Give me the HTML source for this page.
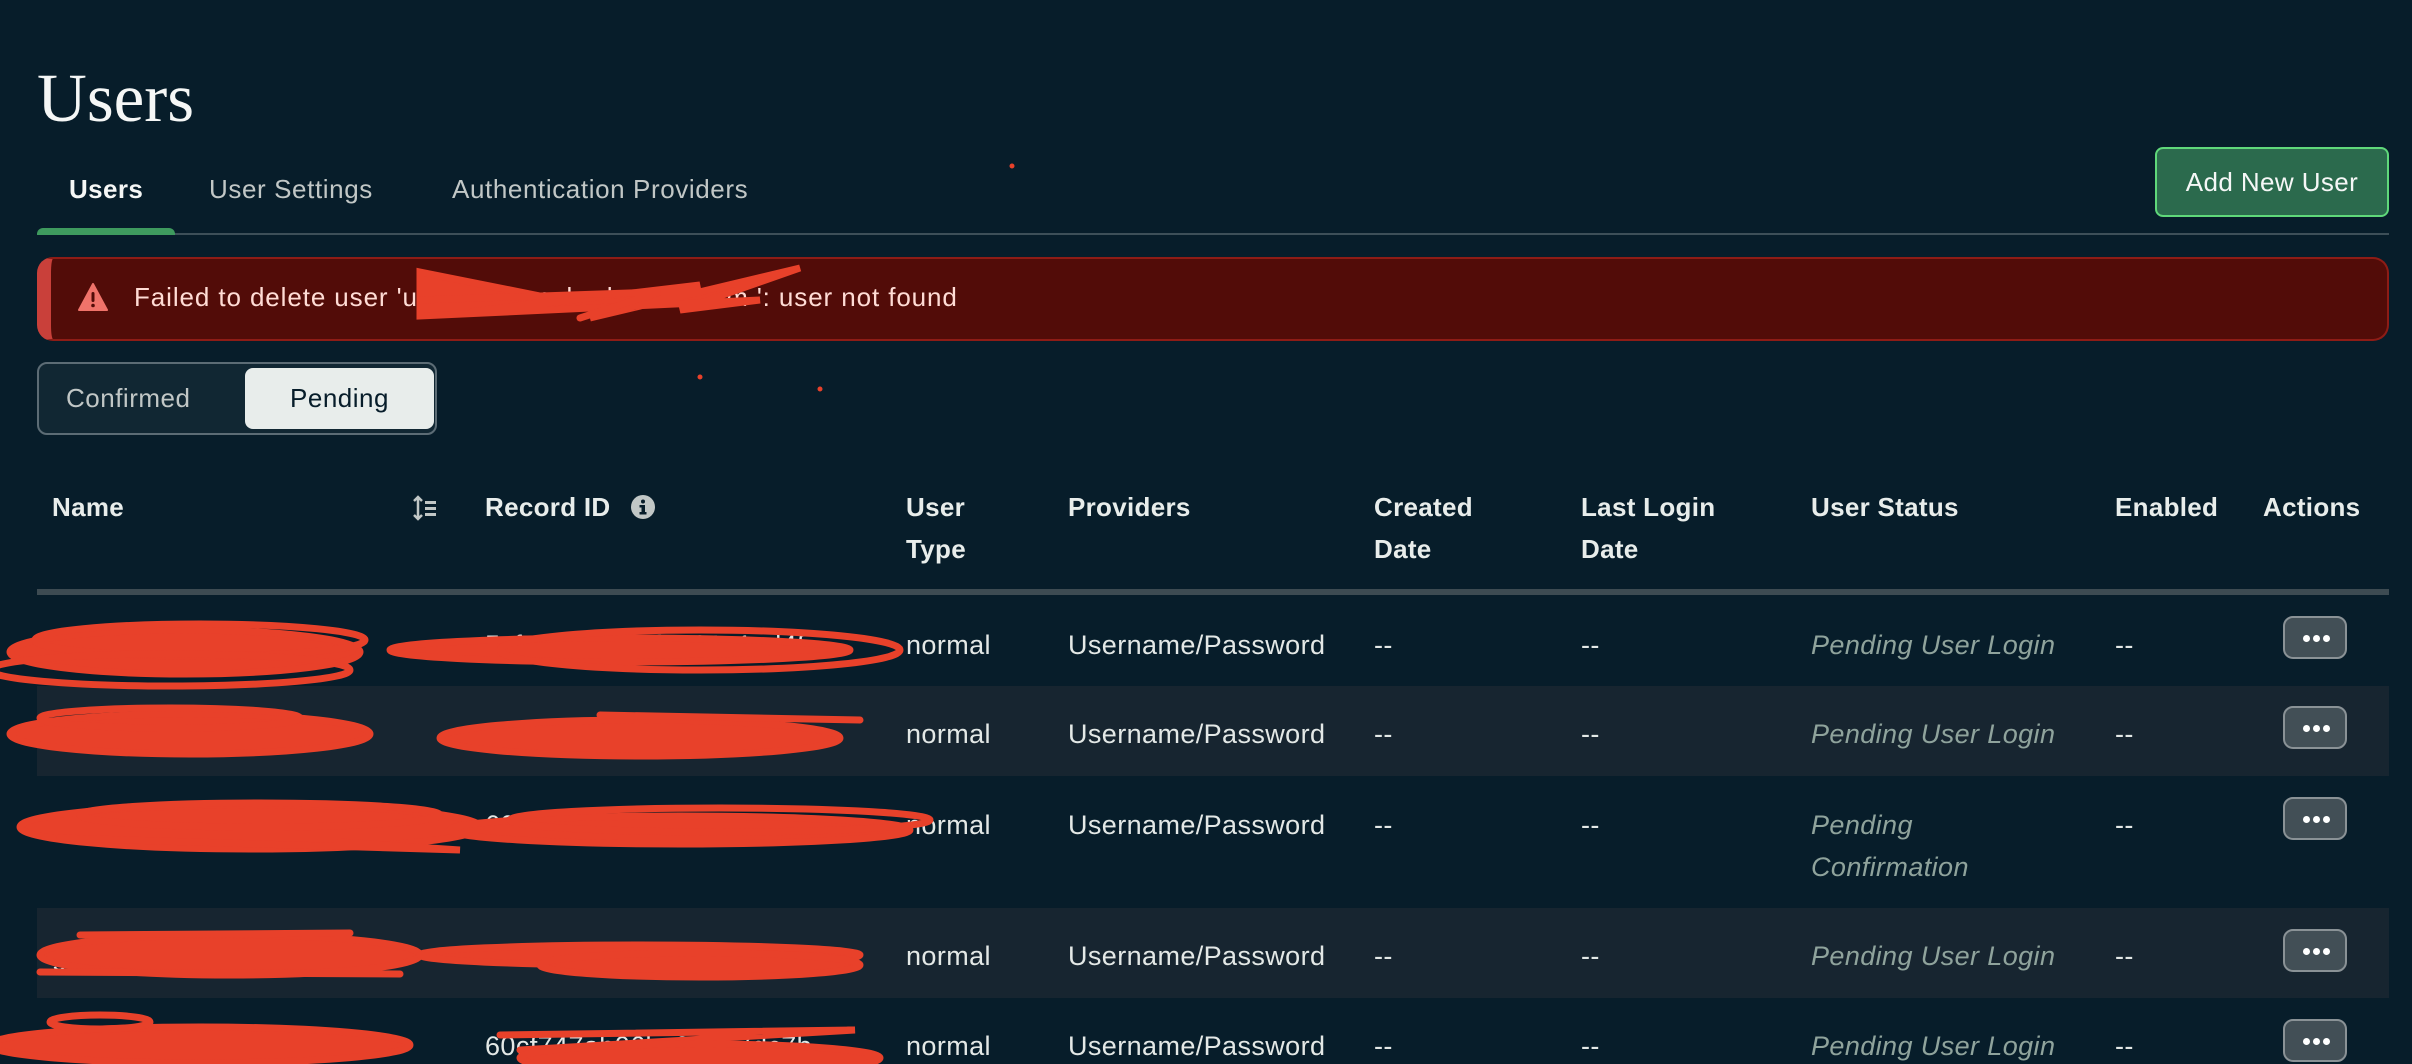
<!DOCTYPE html>
<html><head><meta charset="utf-8">
<style>
*{margin:0;padding:0;box-sizing:border-box}
html,body{width:2412px;height:1064px;overflow:hidden;background:#071d2a;font-family:"Liberation Sans",sans-serif;color:#e3e8e6}
.a{position:absolute;white-space:nowrap}
.t{font-size:27px;line-height:32px;letter-spacing:0.4px}
.h{font-size:26px;font-weight:bold;line-height:42px;color:#e8edeb;letter-spacing:0.3px}
.st{color:#8fa39c;font-style:italic}
.btn{position:absolute;left:2283px;width:64px;height:43px;border:2px solid #8a9296;background:#424f56;border-radius:10px}
.btn i{position:absolute;top:17px;width:7px;height:7px;border-radius:50%;background:#fff}
</style></head><body>
<div class="a" style="left:37px;top:58px;font-family:'Liberation Serif',serif;font-size:69px;line-height:80px;color:#f5f7f6">Users</div>

<div class="a" style="left:69px;top:174px;font-size:26px;font-weight:bold;color:#f5f7f6;letter-spacing:0.4px">Users</div>
<div class="a" style="left:209px;top:174px;font-size:26px;color:#c1c7c6;letter-spacing:0.6px">User Settings</div>
<div class="a" style="left:452px;top:174px;font-size:26px;color:#c1c7c6;letter-spacing:0.6px">Authentication Providers</div>
<div class="a" style="left:37px;top:233px;width:2352px;height:2px;background:#3d4f58"></div>
<div class="a" style="left:37px;top:228px;width:138px;height:7px;background:#3e9a5e;border-radius:6px 6px 0 0"></div>

<div class="a" style="left:2155px;top:147px;width:234px;height:70px;background:#2b6a4d;border:2px solid #5fd87a;border-radius:8px;font-size:26px;color:#f5f7f6;text-align:center;line-height:66px;letter-spacing:0.4px">Add New User</div>

<div class="a" style="left:37px;top:257px;width:2352px;height:84px;background:#520c08;border:2px solid #8e1c16;border-left:14px solid #c9403a;border-radius:16px"></div>
<svg class="a" style="left:78px;top:283px" width="30" height="28" viewBox="0 0 30 28"><path d="M15 1 L29 27 L1 27 Z" fill="#f0736a" stroke="#f0736a" stroke-linejoin="round" stroke-width="2"/><rect x="13.5" y="9" width="3" height="10" rx="1.5" fill="#520c08"/><circle cx="15" cy="22.5" r="1.8" fill="#520c08"/></svg>
<div class="a" style="left:134px;top:282px;font-size:26px;color:#ffdcd5;letter-spacing:0.9px">Failed to delete user 'user@example-domain.com ': user not found</div>

<div class="a" style="left:37px;top:362px;width:400px;height:73px;background:#112733;border:2px solid #5c6c75;border-radius:10px"></div>
<div class="a" style="left:66px;top:383px;font-size:26px;color:#c1c7c6;letter-spacing:0.5px">Confirmed</div>
<div class="a" style="left:245px;top:368px;width:189px;height:61px;background:#e8edeb;border-radius:8px;font-size:26px;color:#071d2a;text-align:center;line-height:61px;letter-spacing:0.5px">Pending</div>

<div class="a h" style="left:52px;top:486px">Name</div>
<svg class="a" style="left:412px;top:495px" width="26" height="26" viewBox="0 0 26 26"><path d="M6 2 L6 24 M2 6 L6 2 L10 6 M2 20 L6 24 L10 20" stroke="#c1c7c6" stroke-width="2.5" fill="none"/><rect x="13" y="6" width="11" height="3" fill="#c1c7c6"/><rect x="13" y="12" width="11" height="3" fill="#c1c7c6"/><rect x="13" y="18" width="11" height="3" fill="#c1c7c6"/></svg>
<div class="a h" style="left:485px;top:486px">Record ID</div>
<svg class="a" style="left:631px;top:495px" width="24" height="24" viewBox="0 0 24 24"><circle cx="12" cy="12" r="12" fill="#c1c7c6"/><rect x="10.5" y="10" width="3.5" height="9" fill="#071d2a"/><rect x="8.5" y="10" width="4" height="2.5" fill="#071d2a"/><rect x="8.5" y="17" width="7" height="2.5" fill="#071d2a"/><circle cx="12" cy="6.5" r="2" fill="#071d2a"/></svg>
<div class="a h" style="left:906px;top:486px">User<br>Type</div>
<div class="a h" style="left:1068px;top:486px">Providers</div>
<div class="a h" style="left:1374px;top:486px">Created<br>Date</div>
<div class="a h" style="left:1581px;top:486px">Last Login<br>Date</div>
<div class="a h" style="left:1811px;top:486px">User Status</div>
<div class="a h" style="left:2115px;top:486px">Enabled</div>
<div class="a h" style="left:2263px;top:486px">Actions</div>
<div class="a" style="left:37px;top:589px;width:2352px;height:6px;background:#3d4b52"></div>

<div class="a" style="left:37px;top:686px;width:2352px;height:90px;background:#172530"></div>
<div class="a" style="left:37px;top:908px;width:2352px;height:90px;background:#172530"></div>

<div class="a t" style="left:52px;top:629px">tester05@example.com</div>
<div class="a t" style="left:485px;top:629px">5cf4f500a448f0221c1cd4f</div>
<div class="a t" style="left:906px;top:629px">normal</div>
<div class="a t" style="left:1068px;top:629px">Username/Password</div>
<div class="a t" style="left:1374px;top:629px">--</div>
<div class="a t" style="left:1581px;top:629px">--</div>
<div class="a t st" style="left:1811px;top:629px">Pending User Login</div>
<div class="a t" style="left:2115px;top:629px">--</div>
<div class="btn" style="top:616px"><i style="left:18px"></i><i style="left:28px"></i><i style="left:38px"></i></div>

<div class="a t" style="left:52px;top:718px">tom@example.com</div>
<div class="a t" style="left:485px;top:718px">60cf44a0a4c5c5528f3b</div>
<div class="a t" style="left:906px;top:718px">normal</div>
<div class="a t" style="left:1068px;top:718px">Username/Password</div>
<div class="a t" style="left:1374px;top:718px">--</div>
<div class="a t" style="left:1581px;top:718px">--</div>
<div class="a t st" style="left:1811px;top:718px">Pending User Login</div>
<div class="a t" style="left:2115px;top:718px">--</div>
<div class="btn" style="top:706px"><i style="left:18px"></i><i style="left:28px"></i><i style="left:38px"></i></div>

<div class="a t" style="left:52px;top:809px">ve.example@aderbil</div>
<div class="a t" style="left:485px;top:809px">60bc4e06ab8f788f65cf3f</div>
<div class="a t" style="left:906px;top:809px">normal</div>
<div class="a t" style="left:1068px;top:809px">Username/Password</div>
<div class="a t" style="left:1374px;top:809px">--</div>
<div class="a t" style="left:1581px;top:809px">--</div>
<div class="a t st" style="left:1811px;top:804px;line-height:42px">Pending<br>Confirmation</div>
<div class="a t" style="left:2115px;top:809px">--</div>
<div class="btn" style="top:797px"><i style="left:18px"></i><i style="left:28px"></i><i style="left:38px"></i></div>

<div class="a t" style="left:52px;top:940px">gab@gmail.com</div>
<div class="a t" style="left:485px;top:940px">60bd6b1a61a7c40747204</div>
<div class="a t" style="left:906px;top:940px">normal</div>
<div class="a t" style="left:1068px;top:940px">Username/Password</div>
<div class="a t" style="left:1374px;top:940px">--</div>
<div class="a t" style="left:1581px;top:940px">--</div>
<div class="a t st" style="left:1811px;top:940px">Pending User Login</div>
<div class="a t" style="left:2115px;top:940px">--</div>
<div class="btn" style="top:929px"><i style="left:18px"></i><i style="left:28px"></i><i style="left:38px"></i></div>

<div class="a t" style="left:52px;top:1030px">al.p@gmail.com</div>
<div class="a t" style="left:485px;top:1030px">60cf747ab06bc0a9e7dc7b</div>
<div class="a t" style="left:906px;top:1030px">normal</div>
<div class="a t" style="left:1068px;top:1030px">Username/Password</div>
<div class="a t" style="left:1374px;top:1030px">--</div>
<div class="a t" style="left:1581px;top:1030px">--</div>
<div class="a t st" style="left:1811px;top:1030px">Pending User Login</div>
<div class="a t" style="left:2115px;top:1030px">--</div>
<div class="btn" style="top:1019px"><i style="left:18px"></i><i style="left:28px"></i><i style="left:38px"></i></div>

<svg class="a" style="left:0;top:0" width="2412" height="1064" viewBox="0 0 2412 1064">
<g fill="#e8412a" stroke="#e8412a" stroke-width="7" stroke-linecap="round">
<circle cx="1012" cy="166" r="1.5" stroke-width="2"/><circle cx="700" cy="377" r="1.5" stroke-width="2"/><circle cx="820" cy="389" r="1.5" stroke-width="2"/>
<path d="M420 272 L560 300 L470 312 L700 285 L590 318 L800 268 L680 310 L760 300 L420 316 Z"/>
<path d="M420 300 L660 292 L580 318" fill="none"/>
<ellipse cx="185" cy="652" rx="175" ry="22"/>
<ellipse cx="200" cy="640" rx="165" ry="16" fill="none"/>
<ellipse cx="170" cy="670" rx="180" ry="16" fill="none"/>
<ellipse cx="620" cy="650" rx="230" ry="12"/>
<ellipse cx="700" cy="650" rx="200" ry="20" fill="none"/>
<ellipse cx="190" cy="734" rx="180" ry="20"/>
<ellipse cx="170" cy="718" rx="130" ry="10" fill="none"/>
<ellipse cx="640" cy="738" rx="200" ry="18"/>
<path d="M600 715 L860 720" fill="none"/>
<ellipse cx="250" cy="827" rx="230" ry="22"/>
<ellipse cx="260" cy="815" rx="180" ry="12" fill="none"/>
<path d="M60 838 L460 850 L340 842" fill="none"/>
<ellipse cx="680" cy="830" rx="230" ry="14"/>
<ellipse cx="720" cy="820" rx="210" ry="12" fill="none"/>
<ellipse cx="230" cy="955" rx="190" ry="20"/>
<path d="M80 935 L350 933 M40 972 L400 974" fill="none"/>
<ellipse cx="640" cy="955" rx="220" ry="10"/>
<ellipse cx="700" cy="965" rx="160" ry="12"/>
<ellipse cx="200" cy="1045" rx="210" ry="18"/>
<ellipse cx="100" cy="1022" rx="50" ry="7" fill="none"/>
<path d="M500 1035 L855 1030 L520 1050" fill="none"/>
<ellipse cx="700" cy="1058" rx="180" ry="14"/>
</g>
</svg>
</body></html>
